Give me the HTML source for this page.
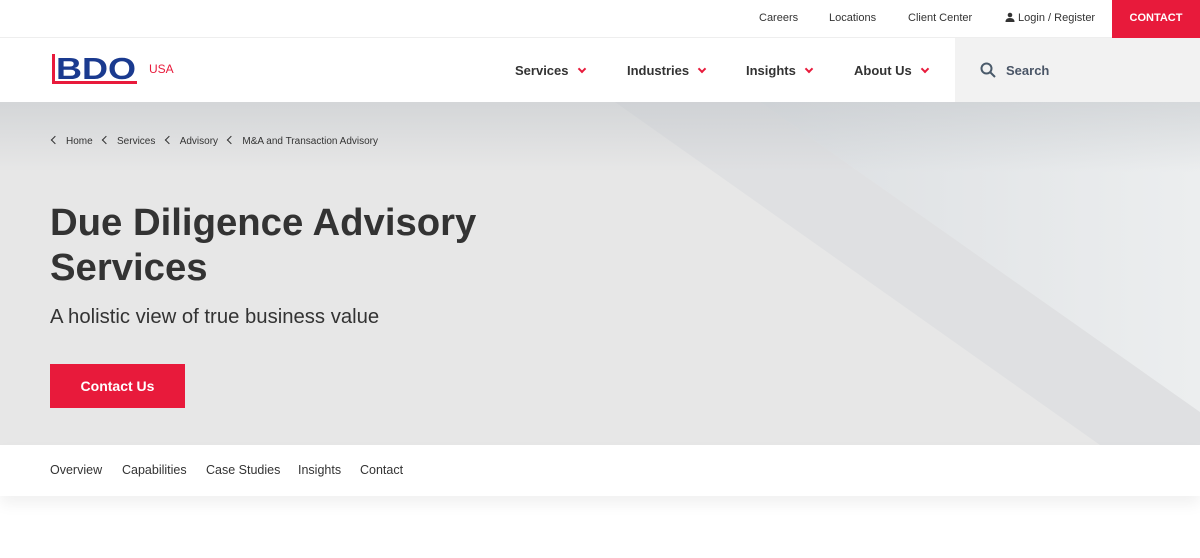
<!DOCTYPE html>
<html><head><meta charset="utf-8"><style>
*{margin:0;padding:0;box-sizing:border-box}
body{width:1200px;height:558px;overflow:hidden;font-family:"Liberation Sans",sans-serif;background:#fff;color:#333;position:relative}
.top{position:absolute;top:0;left:0;width:1200px;height:38px;border-bottom:1px solid #eee;font-size:11px;color:#333}
.top span{position:absolute;top:12px}
.contact{position:absolute;right:0;top:0;width:88px;height:38px;background:#e81a3b;color:#fff;font-weight:bold;font-size:11px;text-align:center;line-height:37px}
.nav{position:absolute;top:38px;left:0;width:1200px;height:64px;background:#fff}
.nav .it{position:absolute;top:25px;font-size:13px;font-weight:bold;color:#333}
.chev{display:inline-block;width:6px;height:6px;border-right:2px solid #e81a3b;border-bottom:2px solid #e81a3b;transform:rotate(45deg);margin-left:10px;position:relative;top:-3px}
.search{position:absolute;left:955px;top:38px;width:245px;height:64px;background:#f2f2f2}
.hero{position:absolute;top:102px;left:0;width:1200px;height:343px;background:#e7e7e7;overflow:hidden}
.bc{position:absolute;top:34px;left:50px;font-size:10px;color:#333}
.bc b{display:inline-block;width:6px;height:6px;border-left:1.5px solid #333;border-bottom:1.5px solid #333;transform:rotate(45deg);margin:0 8px 0 2px;position:relative;top:-1px}
h1{position:absolute;left:50px;top:98px;font-size:38.3px;line-height:45px;font-weight:bold;color:#333}
.sub{position:absolute;left:50px;top:204px;font-size:20.3px;color:#333}
.btn{position:absolute;left:50px;top:262px;width:135px;height:44px;background:#e81a3b;color:#fff;font-weight:bold;font-size:14px;text-align:center;line-height:45px}
.tabs{position:absolute;top:445px;left:0;width:1200px;height:51px;background:#fff;box-shadow:0 8px 14px rgba(0,0,0,.06);font-size:12.5px}
.tabs span{position:absolute;top:18px}
</style></head><body>
<div class="top">
<span style="left:759px">Careers</span><span style="left:829px">Locations</span><span style="left:908px">Client Center</span>
<span style="left:1005px"><svg width="10" height="10" viewBox="0 0 10 10" style="vertical-align:-1px"><circle cx="5" cy="3" r="2.3" fill="#333"/><path d="M0.5 10 Q0.5 6 5 6 Q9.5 6 9.5 10Z" fill="#333"/></svg> Login / Register</span>
<div class="contact">CONTACT</div></div>
<div class="nav">
<svg style="position:absolute;left:52px;top:14px" width="86" height="34" viewBox="0 0 86 34"><rect x="0" y="2" width="3" height="28" fill="#e81a3b"/><rect x="0" y="29" width="85" height="3" fill="#e81a3b"/><text x="4" y="27" font-family="Liberation Sans" font-weight="bold" font-size="31" fill="#1a3a8f" textLength="80" lengthAdjust="spacingAndGlyphs">BDO</text></svg>
<span style="position:absolute;left:149px;top:24px;color:#e81a3b;font-size:12px">USA</span>
<span class="it" style="left:515px">Services<i class="chev"></i></span>
<span class="it" style="left:627px">Industries<i class="chev"></i></span>
<span class="it" style="left:746px">Insights<i class="chev"></i></span>
<span class="it" style="left:854px">About Us<i class="chev"></i></span>
</div>
<div class="search"><svg style="position:absolute;left:25px;top:24px" width="16" height="16" viewBox="0 0 16 16"><circle cx="6.5" cy="6.5" r="5" fill="none" stroke="#4a5a6a" stroke-width="2"/><path d="M10 10l5 5" stroke="#4a5a6a" stroke-width="2"/></svg><span style="position:absolute;left:51px;top:25px;font-size:13px;font-weight:bold;color:#4a5566">Search</span></div>
<div class="hero">
<svg style="position:absolute;left:0;top:0" width="1200" height="343">
<defs><linearGradient id="r" x1="0" y1="0" x2="1" y2="0"><stop offset="0" stop-color="#dcdfe2"/><stop offset="1" stop-color="#eceeef"/></linearGradient>
<linearGradient id="t" x1="0" y1="0" x2="0" y2="1"><stop offset="0" stop-color="#c0c4c8" stop-opacity=".5"/><stop offset="1" stop-color="#c0c4c8" stop-opacity="0"/></linearGradient></defs>
<polygon points="615,0 760,0 1200,310 1200,343 1100,343" fill="#dfe0e2"/>
<polygon points="760,0 1200,0 1200,310" fill="url(#r)"/>
<rect x="0" y="0" width="1200" height="70" fill="url(#t)"/>
</svg>
<div class="bc"><b></b>Home &nbsp;&nbsp;<b></b>Services &nbsp;&nbsp;<b></b>Advisory &nbsp;&nbsp;<b></b>M&amp;A and Transaction Advisory</div>
<h1>Due Diligence Advisory<br>Services</h1>
<div class="sub">A holistic view of true business value</div>
<div class="btn">Contact Us</div>
</div>
<div class="tabs"><span style="left:50px">Overview</span><span style="left:122px">Capabilities</span><span style="left:206px">Case Studies</span><span style="left:298px">Insights</span><span style="left:360px">Contact</span></div>
</body></html>
